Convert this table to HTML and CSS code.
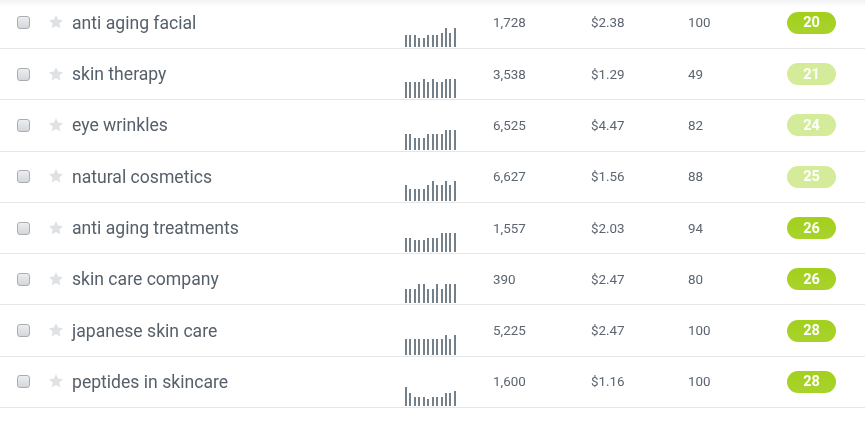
FILE: index.html
```html
<!DOCTYPE html>
<html>
<head>
<meta charset="utf-8">
<link rel="stylesheet" href="styles.css">
</head>
<body>
<div class="shade"></div>
<div class="table">
  <div class="row">
    <span class="cb"></span>
    <svg class="star" viewBox="0 0 24 24"><polygon points="12,1.5 15.1,8.4 22.5,9.2 17,14.2 18.5,21.6 12,17.9 5.5,21.6 7,14.2 1.5,9.2 8.9,8.4"/></svg>
    <span class="kw">anti aging facial</span>
    <div class="spark"><i style="height:12px"></i><i style="height:12px"></i><i style="height:12px"></i><i style="height:9px"></i><i style="height:9px"></i><i style="height:12px"></i><i style="height:12px"></i><i style="height:12px"></i><i style="height:14px"></i><i style="height:19px"></i><i style="height:14px"></i><i style="height:19px"></i></div>
    <span class="num">1,728</span>
    <span class="num">$2.38</span>
    <span class="num">100</span>
    <span class="badge dark">20</span>
  </div>
  <div class="row">
    <span class="cb"></span>
    <svg class="star" viewBox="0 0 24 24"><polygon points="12,1.5 15.1,8.4 22.5,9.2 17,14.2 18.5,21.6 12,17.9 5.5,21.6 7,14.2 1.5,9.2 8.9,8.4"/></svg>
    <span class="kw">skin therapy</span>
    <div class="spark"><i style="height:16px"></i><i style="height:16px"></i><i style="height:16px"></i><i style="height:16px"></i><i style="height:19px"></i><i style="height:16px"></i><i style="height:19px"></i><i style="height:16px"></i><i style="height:16px"></i><i style="height:19px"></i><i style="height:19px"></i><i style="height:19px"></i></div>
    <span class="num">3,538</span>
    <span class="num">$1.29</span>
    <span class="num">49</span>
    <span class="badge light">21</span>
  </div>
  <div class="row">
    <span class="cb"></span>
    <svg class="star" viewBox="0 0 24 24"><polygon points="12,1.5 15.1,8.4 22.5,9.2 17,14.2 18.5,21.6 12,17.9 5.5,21.6 7,14.2 1.5,9.2 8.9,8.4"/></svg>
    <span class="kw">eye wrinkles</span>
    <div class="spark"><i style="height:16px"></i><i style="height:16px"></i><i style="height:12px"></i><i style="height:12px"></i><i style="height:12px"></i><i style="height:16px"></i><i style="height:16px"></i><i style="height:16px"></i><i style="height:16px"></i><i style="height:20px"></i><i style="height:20px"></i><i style="height:20px"></i></div>
    <span class="num">6,525</span>
    <span class="num">$4.47</span>
    <span class="num">82</span>
    <span class="badge light">24</span>
  </div>
  <div class="row">
    <span class="cb"></span>
    <svg class="star" viewBox="0 0 24 24"><polygon points="12,1.5 15.1,8.4 22.5,9.2 17,14.2 18.5,21.6 12,17.9 5.5,21.6 7,14.2 1.5,9.2 8.9,8.4"/></svg>
    <span class="kw">natural cosmetics</span>
    <div class="spark"><i style="height:16px"></i><i style="height:12px"></i><i style="height:12px"></i><i style="height:12px"></i><i style="height:12px"></i><i style="height:16px"></i><i style="height:20px"></i><i style="height:16px"></i><i style="height:16px"></i><i style="height:20px"></i><i style="height:16px"></i><i style="height:20px"></i></div>
    <span class="num">6,627</span>
    <span class="num">$1.56</span>
    <span class="num">88</span>
    <span class="badge light">25</span>
  </div>
  <div class="row">
    <span class="cb"></span>
    <svg class="star" viewBox="0 0 24 24"><polygon points="12,1.5 15.1,8.4 22.5,9.2 17,14.2 18.5,21.6 12,17.9 5.5,21.6 7,14.2 1.5,9.2 8.9,8.4"/></svg>
    <span class="kw">anti aging treatments</span>
    <div class="spark"><i style="height:14px"></i><i style="height:14px"></i><i style="height:12px"></i><i style="height:12px"></i><i style="height:12px"></i><i style="height:14px"></i><i style="height:14px"></i><i style="height:14px"></i><i style="height:19px"></i><i style="height:19px"></i><i style="height:19px"></i><i style="height:19px"></i></div>
    <span class="num">1,557</span>
    <span class="num">$2.03</span>
    <span class="num">94</span>
    <span class="badge dark">26</span>
  </div>
  <div class="row">
    <span class="cb"></span>
    <svg class="star" viewBox="0 0 24 24"><polygon points="12,1.5 15.1,8.4 22.5,9.2 17,14.2 18.5,21.6 12,17.9 5.5,21.6 7,14.2 1.5,9.2 8.9,8.4"/></svg>
    <span class="kw">skin care company</span>
    <div class="spark"><i style="height:14px"></i><i style="height:14px"></i><i style="height:14px"></i><i style="height:19px"></i><i style="height:19px"></i><i style="height:14px"></i><i style="height:14px"></i><i style="height:19px"></i><i style="height:14px"></i><i style="height:19px"></i><i style="height:19px"></i><i style="height:19px"></i></div>
    <span class="num">390</span>
    <span class="num">$2.47</span>
    <span class="num">80</span>
    <span class="badge dark">26</span>
  </div>
  <div class="row">
    <span class="cb"></span>
    <svg class="star" viewBox="0 0 24 24"><polygon points="12,1.5 15.1,8.4 22.5,9.2 17,14.2 18.5,21.6 12,17.9 5.5,21.6 7,14.2 1.5,9.2 8.9,8.4"/></svg>
    <span class="kw">japanese skin care</span>
    <div class="spark"><i style="height:16px"></i><i style="height:16px"></i><i style="height:16px"></i><i style="height:16px"></i><i style="height:16px"></i><i style="height:16px"></i><i style="height:16px"></i><i style="height:16px"></i><i style="height:16px"></i><i style="height:20px"></i><i style="height:16px"></i><i style="height:20px"></i></div>
    <span class="num">5,225</span>
    <span class="num">$2.47</span>
    <span class="num">100</span>
    <span class="badge dark">28</span>
  </div>
  <div class="row">
    <span class="cb"></span>
    <svg class="star" viewBox="0 0 24 24"><polygon points="12,1.5 15.1,8.4 22.5,9.2 17,14.2 18.5,21.6 12,17.9 5.5,21.6 7,14.2 1.5,9.2 8.9,8.4"/></svg>
    <span class="kw">peptides in skincare</span>
    <div class="spark"><i style="height:19px"></i><i style="height:13px"></i><i style="height:9px"></i><i style="height:9px"></i><i style="height:9px"></i><i style="height:7px"></i><i style="height:9px"></i><i style="height:9px"></i><i style="height:9px"></i><i style="height:13px"></i><i style="height:13px"></i><i style="height:15px"></i></div>
    <span class="num">1,600</span>
    <span class="num">$1.16</span>
    <span class="num">100</span>
    <span class="badge dark">28</span>
  </div>
</div>
</body>
</html>
```

FILE: styles.css
```css
html, body {
  margin: 0;
  padding: 0;
  background: #ffffff;
  overflow: hidden;
}
body {
  font-family: Roboto, "Liberation Sans", sans-serif;
  color: #555e68;
}
.shade {
  position: fixed;
  top: 0;
  left: 0;
  right: 0;
  height: 7px;
  background: linear-gradient(to bottom, rgba(120,130,135,0.10), rgba(120,130,135,0));
  pointer-events: none;
}
.table {
  margin-top: -2.3px;
}
.row {
  display: grid;
  grid-template-columns: 31px 24px 333px 88px 98px 97px 99px 49px;
  align-items: center;
  height: 50.3px;
  padding-left: 17px;
  border-bottom: 1px solid #e4e6e8;
  position: relative;
}
.cb {
  width: 11px;
  height: 11px;
  border: 1px solid #a9aeb3;
  border-radius: 3px;
  background: linear-gradient(to bottom, #eceef0, #d3d7db);
  box-sizing: content-box;
}
.star {
  width: 16px;
  height: 16px;
  fill: #dfe2e5;
  margin-top: -1px;
}
.kw {
  font-size: 17.6px;
  color: #56606a;
  white-space: nowrap;
}
.spark {
  align-self: end;
  display: flex;
  align-items: flex-end;
  gap: 2.45px;
  height: 21px;
  padding-bottom: 1px;
}
.spark i {
  display: block;
  width: 2px;
  background: #74808a;
}
.num {
  font-size: 13.4px;
  color: #5c6570;
}
.badge {
  height: 22px;
  border-radius: 11px;
  color: #ffffff;
  font-weight: 700;
  font-size: 14.5px;
  display: flex;
  align-items: center;
  justify-content: center;
}
.badge.dark {
  background: linear-gradient(to bottom, #a3cf1d, #a8d32c);
}
.badge.light {
  background: #d4eb9a;
}
```
